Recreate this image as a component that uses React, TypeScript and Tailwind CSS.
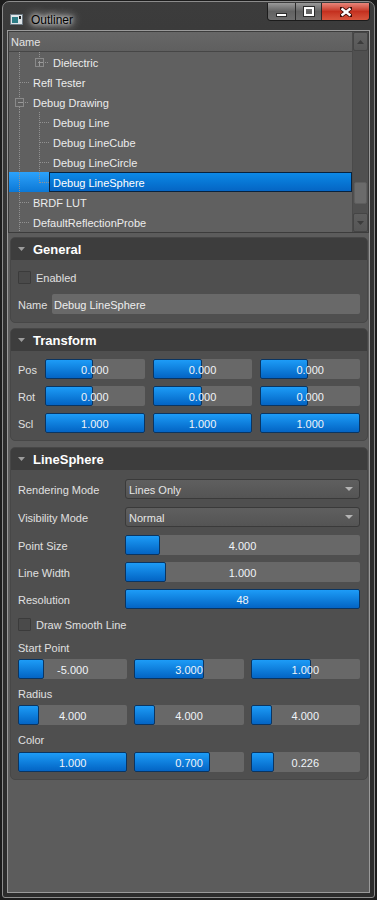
import React from 'react';

type Guide = 'pipe' | 'tee' | 'ell';

type TreeRow = {
  label: string;
  guides: Guide[];
  box?: 'plus' | 'minus';
  selected?: boolean;
};

const rows: TreeRow[] = [
  { label: 'Dielectric', guides: ['pipe', 'ell'], box: 'plus' },
  { label: 'Refl Tester', guides: ['tee'] },
  { label: 'Debug Drawing', guides: ['tee'], box: 'minus' },
  { label: 'Debug Line', guides: ['pipe', 'tee'] },
  { label: 'Debug LineCube', guides: ['pipe', 'tee'] },
  { label: 'Debug LineCircle', guides: ['pipe', 'tee'] },
  { label: 'Debug LineSphere', guides: ['pipe', 'ell'], selected: true },
  { label: 'BRDF LUT', guides: ['tee'] },
  { label: 'DefaultReflectionProbe', guides: ['tee'] },
];

const dot = { stroke: '#929292', strokeWidth: 1, strokeDasharray: '1 1', shapeRendering: 'crispEdges' as const };

function Guides({ guides, box }: { guides: Guide[]; box?: 'plus' | 'minus' }) {
  const w = guides.length * 20;
  return (
    <svg width={w} height="20" className="shrink-0">
      {guides.map((g, i) => {
        const cx = i * 20 + 10.5;
        const last = i === guides.length - 1;
        if (!last) return <line key={i} x1={cx} y1="0" x2={cx} y2="20" {...dot} />;
        if (box) {
          return (
            <g key={i}>
              <line x1={cx} y1="0" x2={cx} y2="6" {...dot} />
              {g === 'tee' && <line x1={cx} y1="15" x2={cx} y2="20" {...dot} />}
              <rect x={cx - 4} y="6.5" width="8" height="8" fill="none" stroke="#8a8a8a" shapeRendering="crispEdges" />
              <line x1={cx - 2} y1="10.5" x2={cx + 3} y2="10.5" stroke="#9a9a9a" shapeRendering="crispEdges" />
              {box === 'plus' && <line x1={cx} y1="8.5" x2={cx} y2="13.5" stroke="#9a9a9a" shapeRendering="crispEdges" />}
              <line x1={cx + 5} y1="10.5" x2={i * 20 + 20} y2="10.5" {...dot} />
            </g>
          );
        }
        return (
          <g key={i}>
            <line x1={cx} y1="0" x2={cx} y2={g === 'tee' ? 20 : 11} {...dot} />
            <line x1={cx} y1="10.5" x2={i * 20 + 20} y2="10.5" {...dot} />
          </g>
        );
      })}
    </svg>
  );
}

function Scrollbar() {
  return (
    <div className="flex w-[16px] shrink-0 flex-col border-l border-[#4a4a4a] bg-[#505050]">
      <div className="flex h-[19px] items-center justify-center rounded-[2px] border border-[#454545] bg-gradient-to-b from-[#626262] to-[#585858]">
        <svg width="7" height="4"><path d="M3.5 0L7 4H0z" fill="#3c3c3c" /></svg>
      </div>
      <div className="flex-1">
        <div className="mx-[1px] mt-[131px] h-[22px] rounded-[2px] border border-[#5e5e5e] bg-[#6b6b6b]" />
      </div>
      <div className="flex h-[19px] items-center justify-center rounded-[2px] border border-[#454545] bg-gradient-to-b from-[#5e5e5e] to-[#565656]">
        <svg width="7" height="4"><path d="M0 0h7L3.5 4z" fill="#3c3c3c" /></svg>
      </div>
    </div>
  );
}

function Tree() {
  return (
    <div className="flex h-[202px] shrink-0 border border-[#3c3c3c] bg-[#606060]">
      <div className="flex min-w-0 flex-1 flex-col">
        <div className="flex h-[20px] shrink-0 items-center border-b border-[#464646] bg-gradient-to-b from-[#676767] to-[#5f5f5f] pl-[2px] pt-[2px] text-[11px] text-[#e4e4e4]">
          Name
        </div>
        {rows.map((r) => (
          <div
            key={r.label}
            className={`flex h-[20px] shrink-0 items-center ${r.selected ? 'bg-gradient-to-b from-[#2ba2fb] to-[#0b78d6]' : ''}`}
          >
            <Guides guides={r.guides} box={r.box} />
            {r.selected ? (
              <span className="flex h-full flex-1 items-center border border-[#08223d] bg-gradient-to-b from-[#0d89e6] to-[#0565c4] pl-[3px] pt-[2px] text-[11px] text-white">
                {r.label}
              </span>
            ) : (
              <span className="pl-[4px] pt-[2px] text-[11px] text-[#ececec]">{r.label}</span>
            )}
          </div>
        ))}
      </div>
      <Scrollbar />
    </div>
  );
}

function Card({ title, children, className = '' }: { title: string; children: React.ReactNode; className?: string }) {
  return (
    <div className={`shrink-0 rounded-[5px] border border-[#474747] bg-[#4f4f4f] ${className}`}>
      <div className="flex h-[22px] items-center gap-[8px] rounded-t-[4px] bg-[#3d3d3d] pl-[7px]">
        <svg width="7" height="4"><path d="M0 0h7L3.5 4z" fill="#9c9c9c" /></svg>
        <span className="pt-[1px] text-[13px] font-bold text-white">{title}</span>
      </div>
      <div className="px-[7px]">{children}</div>
    </div>
  );
}

function NumBar({ value, fill }: { value: string; fill: number | 'full' }) {
  return (
    <div className="relative h-[20px] min-w-0 flex-1 rounded-[2px] bg-[#686868]">
      <div
        className="absolute bottom-0 left-0 top-0 rounded-[2px] border border-[#0a3562] bg-gradient-to-b from-[#1d9cf7] to-[#0464c4]"
        style={{ width: fill === 'full' ? '100%' : `${fill}px` }}
      />
      <span className="relative flex h-full items-center justify-center pt-[2px] text-[11px] text-[#f0f4f8]">{value}</span>
    </div>
  );
}

function Check({ label }: { label: string }) {
  return (
    <div className="flex h-[20px] items-center gap-[5px]">
      <div className="h-[13px] w-[13px] rounded-[1px] border border-[#3b3b3b] bg-[#4a4a4a]" />
      <span className="pt-[2px] text-[11px] text-[#e0e0e0]">{label}</span>
    </div>
  );
}

function Combo({ value }: { value: string }) {
  return (
    <div className="flex h-[20px] flex-1 items-center justify-between rounded-[3px] border border-[#3a3a3a] bg-gradient-to-b from-[#5f5f5f] to-[#545454] pl-[3px] pr-[6px]">
      <span className="pt-[2px] text-[11px] text-[#e6e6e6]">{value}</span>
      <svg width="8" height="4"><path d="M0 0h8L4 4z" fill="#b4b4b4" /></svg>
    </div>
  );
}

function Row({ label, children, className = '' }: { label: string; children: React.ReactNode; className?: string }) {
  return (
    <div className={`flex h-[20px] items-center ${className}`}>
      <span className="w-[107px] shrink-0 pt-[2px] text-[11px] text-[#e0e0e0]">{label}</span>
      {children}
    </div>
  );
}

function Vec({ items, className = '' }: { items: [string, number | 'full'][]; className?: string }) {
  return (
    <div className={`flex h-[20px] gap-[7px] ${className}`}>
      {items.map(([v, f], i) => (
        <NumBar key={i} value={v} fill={f} />
      ))}
    </div>
  );
}

function Properties() {
  const xf: [string, [string, number | 'full'][]][] = [
    ['Pos', [['0.000', 48], ['0.000', 49], ['0.000', 48]]],
    ['Rot', [['0.000', 48], ['0.000', 49], ['0.000', 48]]],
    ['Scl', [['1.000', 'full'], ['1.000', 'full'], ['1.000', 'full']]],
  ];
  return (
    <div className="flex min-h-0 flex-1 flex-col pl-[2px] pr-[1px] pt-[4px]">
      <Card title="General">
        <div className="mt-[7px]">
          <Check label="Enabled" />
        </div>
        <div className="mt-[7px] flex h-[20px] items-center">
          <span className="w-[34px] shrink-0 pt-[2px] text-[11px] text-[#e0e0e0]">Name</span>
          <div className="flex h-full flex-1 items-center rounded-[2px] bg-[#696969] pl-[2px] pt-[2px] text-[11px] text-[#eeeeee]">
            Debug LineSphere
          </div>
        </div>
        <div className="h-[8px]" />
      </Card>

      <Card title="Transform" className="mt-[5px]">
        {xf.map(([label, vals], i) => (
          <div key={label} className={`flex h-[20px] items-center ${i === 0 ? 'mt-[8px]' : 'mt-[7px]'}`}>
            <span className="w-[27px] shrink-0 pt-[2px] text-[11px] text-[#e0e0e0]">{label}</span>
            <div className="flex h-full flex-1 gap-[8px]">
              {vals.map(([v, f], j) => (
                <NumBar key={j} value={v} fill={f} />
              ))}
            </div>
          </div>
        ))}
        <div className="h-[7px]" />
      </Card>

      <Card title="LineSphere" className="mt-[6px]">
        <Row label="Rendering Mode" className="mt-[9px]">
          <Combo value="Lines Only" />
        </Row>
        <Row label="Visibility Mode" className="mt-[8px]">
          <Combo value="Normal" />
        </Row>
        <Row label="Point Size" className="mt-[8px]">
          <NumBar value="4.000" fill={35} />
        </Row>
        <Row label="Line Width" className="mt-[7px]">
          <NumBar value="1.000" fill={41} />
        </Row>
        <Row label="Resolution" className="mt-[7px]">
          <NumBar value="48" fill="full" />
        </Row>
        <div className="mt-[5px]">
          <Check label="Draw Smooth Line" />
        </div>
        <div className="mt-[5px] flex h-[16px] items-center pt-[2px] text-[11px] text-[#e0e0e0]">Start Point</div>
        <Vec className="mt-[4px]" items={[['-5.000', 26], ['3.000', 70], ['1.000', 60]]} />
        <div className="mt-[6px] flex h-[16px] items-center pt-[2px] text-[11px] text-[#e0e0e0]">Radius</div>
        <Vec className="mt-[4px]" items={[['4.000', 21], ['4.000', 21], ['4.000', 21]]} />
        <div className="mt-[6px] flex h-[16px] items-center pt-[2px] text-[11px] text-[#e0e0e0]">Color</div>
        <Vec className="mt-[5px]" items={[['1.000', 'full'], ['0.700', 76], ['0.226', 23]]} />
        <div className="h-[7px]" />
      </Card>
    </div>
  );
}

function TitleBar() {
  return (
    <div className="flex h-[28px] shrink-0 items-start">
      <div className="ml-[3px] mt-[9px] flex items-center gap-[8px]">
        <svg width="13" height="11">
          <rect x="0.5" y="0.5" width="12" height="10" fill="#dfe6ea" stroke="#6d7a84" />
          <rect x="2" y="3" width="6" height="6" fill="#2d7d86" />
          <rect x="9" y="2" width="2" height="3" fill="#222" />
        </svg>
        <span className="pt-[2px] text-[12px] leading-[14px] text-black [text-shadow:0_0_4px_#fff,0_0_8px_#fff,0_0_12px_#ddd]">
          Outliner
        </span>
      </div>
      <div className="ml-auto mt-[1px] flex h-[18px] overflow-hidden rounded-b-[4px] border border-t-0 border-[#1c1c1c]">
        <div className="flex w-[28px] items-end justify-center border-r border-[#2a2a2a] bg-gradient-to-b from-[#9a9a9a] via-[#626262] to-[#6e6e6e] pb-[3px]">
          <div className="h-[4px] w-[11px] border border-[#2c2c2c] bg-white" />
        </div>
        <div className="flex w-[26px] items-center justify-center border-r border-[#2a2a2a] bg-gradient-to-b from-[#9a9a9a] via-[#626262] to-[#6e6e6e]">
          <div className="h-[9px] w-[10px] border-[2px] border-white outline outline-1 outline-[#2c2c2c]" />
        </div>
        <div className="flex w-[47px] items-center justify-center bg-gradient-to-b from-[#e8857a] via-[#c4301f] to-[#d8553d]">
          <svg width="12" height="10" viewBox="0 0 12 10">
            <path d="M1 1L11 9M11 1L1 9" stroke="#3a0a05" strokeWidth="4" strokeLinecap="square" />
            <path d="M1.5 1.5L10.5 8.5M10.5 1.5L1.5 8.5" stroke="#ffffff" strokeWidth="2.4" />
          </svg>
        </div>
      </div>
    </div>
  );
}

export default function App() {
  return (
    <div className="h-[900px] w-[377px] overflow-hidden bg-[#1c1c1c] pl-[2px] pt-[1px] font-['Liberation_Sans',Arial,sans-serif]">
      <div className="flex h-[897px] w-[373px] flex-col rounded-b-[3px] rounded-t-[7px] border border-[#8c8c8c] bg-gradient-to-b from-[#3c3c3c] via-[#2c2c2c] to-[#2c2c2c] px-[4px] pb-[4px]">
        <TitleBar />
        <div className="flex min-h-0 flex-1 flex-col border border-[#9a9a9a] bg-[#5c5c5c]">
          <Tree />
          <Properties />
        </div>
      </div>
    </div>
  );
}
